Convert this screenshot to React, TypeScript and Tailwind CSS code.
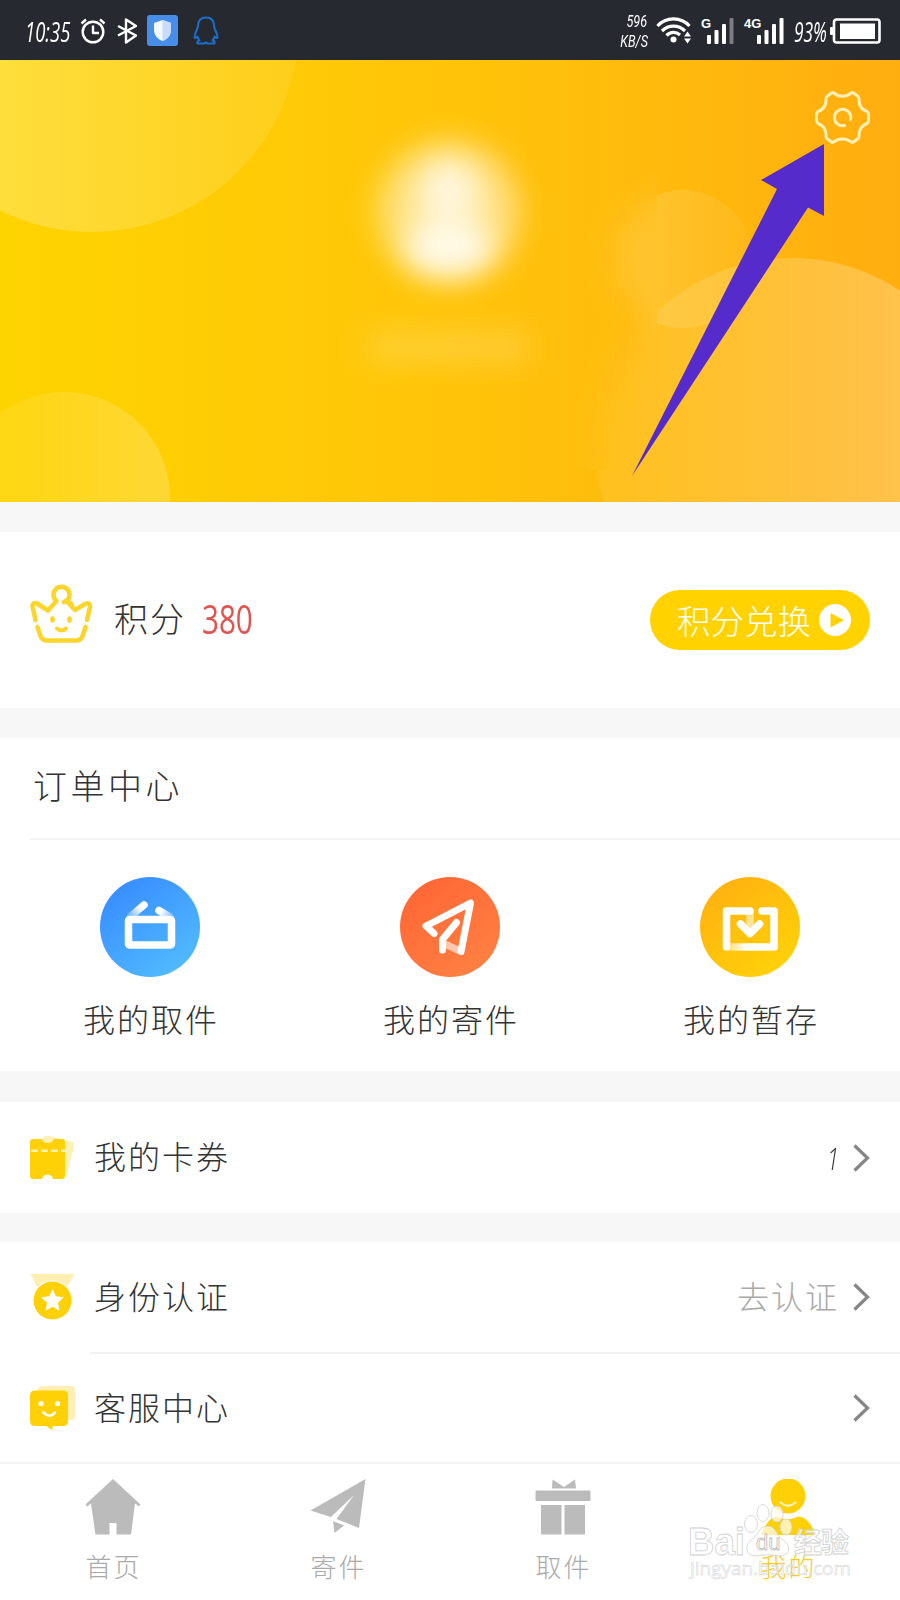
import type { ReactNode } from "react";

const tabLabel = "mt-[12px] pl-[2px] text-[26px] leading-[38px] tracking-[2px] font-light";

function StatusBar() {
  return (
    <div className="flex h-[60px] items-center bg-[#262930] pt-[2px] text-white">
      {/* Clock and left icons */}
      <div className="ml-[25px] w-[55px]">
        <span className="inline-block origin-left scale-x-[0.66] font-['Open_Sans'] text-[28px] font-normal italic">
          10:35
        </span>
      </div>

      <svg width="26" height="26" viewBox="0 0 26 26" fill="none" stroke="#fff" strokeWidth="2.4">
        <circle cx="13" cy="14" r="10.3" />
        <path d="M13 7.500V15H19M1.500 5.500L6 1.500M24.500 5.500L20 1.500" strokeLinejoin="round" />
      </svg>

      <svg className="ml-[11px]" width="20" height="26" viewBox="0 0 20 26" fill="none" stroke="#fff" strokeWidth="2.4">
        <path d="M1 8L19 17.500L9 24.500V1.500L19 8L1 17.500" strokeLinejoin="round" />
      </svg>

      <svg className="ml-[10px]" width="31" height="31" viewBox="0 0 31 31">
        <rect width="31" height="31" rx="3" fill="#478eea" />
        <path d="M15.500 5L24 8V15C24 20 20.500 24 15.500 26C10.500 24 7 20 7 15V8Z" fill="#f3f7fe" />
        <path d="M15.500 5L24 8V15C24 20 20.500 24 15.500 26Z" fill="#c8dbf8" />
      </svg>

      <svg className="ml-[15px]" width="26" height="29" viewBox="0 0 26 29" fill="none" stroke="#1b6fc9" strokeWidth="2" strokeLinejoin="round">
        <path d="M13 1.500C7.500 1.500 5 5 5 10C5 13 1.500 16.500 1.500 21.500C2 22.500 3.500 21.500 4.500 20.500C5 22.500 5.500 23.500 6.500 24.500C4.500 25 4 26 4.500 27.500H11L13 26.500L15 27.500H21.500C22 26 21.500 25 19.500 24.500C20.500 23.500 21 22.500 21.500 20.500C22.500 21.500 24 22.500 24.500 21.500C24.500 16.500 21 13 21 10C21 5 18.500 1.500 13 1.500Z" />
      </svg>

      {/* Network speed */}
      <div className="ml-auto w-[36px] text-right font-['Roboto'] text-[17px] leading-[20px] font-normal italic">
        <div className="origin-right scale-x-[0.74]">596</div>
        <div className="origin-right scale-x-[0.74]">KB/S</div>
      </div>

      <svg className="ml-[9px]" width="36" height="27" viewBox="0 0 36 27" fill="none" stroke="#fff" strokeWidth="3.2">
        <path d="M1.500 9C10 -0.500 25 -0.500 33.500 9" />
        <path d="M6 14C12.500 7.500 22.500 7.500 29 14" />
        <path d="M10.500 18.500C14.500 14.500 20 14.500 24 18" />
        <circle cx="17.500" cy="22.500" r="3" fill="#fff" stroke="none" />
        <path d="M28 19.500L31.500 14.500L35 19.500ZM28 21.500H35L31.500 26.500Z" fill="#fff" stroke="none" />
      </svg>

      <div className="ml-[9px] -mt-[14px] w-[6px] font-['Liberation_Sans'] text-[13px] leading-none font-bold">G</div>
      <svg width="28" height="26" viewBox="0 0 28 26" fill="#fff">
        <rect x="0" y="17" width="4" height="9" rx="1" />
        <rect x="7.500" y="12" width="4" height="14" rx="1" />
        <rect x="15" y="6" width="4" height="20" rx="1" />
        <rect x="22.500" y="0" width="4" height="26" rx="1" fill="#7d7e83" />
      </svg>

      <div className="ml-[9px] -mt-[14px] w-[13px] font-['Liberation_Sans'] text-[13px] leading-none font-bold">4G</div>
      <svg width="28" height="26" viewBox="0 0 28 26" fill="#fff">
        <rect x="0" y="17" width="4" height="9" rx="1" />
        <rect x="7.500" y="12" width="4" height="14" rx="1" />
        <rect x="15" y="6" width="4" height="20" rx="1" />
        <rect x="22.500" y="0" width="4" height="26" rx="1" />
      </svg>

      <div className="ml-[9px] w-[35px]">
        <span className="inline-block origin-left scale-x-[0.62] font-['Open_Sans'] text-[28px] font-normal italic">
          93%
        </span>
      </div>

      <svg className="mr-[19px]" width="52" height="26" viewBox="0 0 52 26" fill="none">
        <rect x="5" y="1.500" width="45.500" height="23" rx="2.500" stroke="#fff" strokeWidth="2.600" />
        <rect x="11" y="5.500" width="35" height="15.500" fill="#fff" />
        <rect x="1" y="9" width="3.500" height="8" rx="1" fill="#fff" />
      </svg>
    </div>
  );
}

function ProfileHeader() {
  return (
    <div className="h-[442px]">
      <svg width="900" height="442" viewBox="0 60 900 442" className="block">
        <defs>
          <linearGradient id="base">
            <stop offset="0" stopColor="#fed400" />
            <stop offset="0.5" stopColor="#ffc409" />
            <stop offset="1" stopColor="#ffae10" />
          </linearGradient>
          <linearGradient id="fadeOut">
            <stop offset="0.3" stopColor="#fff" stopOpacity="0.23" />
            <stop offset="1" stopColor="#fff" stopOpacity="0.08" />
          </linearGradient>
          <linearGradient id="fadeIn">
            <stop offset="0.3" stopColor="#fff" stopOpacity="0.08" />
            <stop offset="1" stopColor="#fff" stopOpacity="0.2" />
          </linearGradient>
          <linearGradient id="fadeBig">
            <stop offset="0" stopColor="#fff" stopOpacity="0.07" />
            <stop offset="0.8" stopColor="#fff" stopOpacity="0.25" />
          </linearGradient>
          <linearGradient id="fadeSmall">
            <stop offset="0.1" stopColor="#fff" stopOpacity="0.16" />
            <stop offset="1" stopColor="#fff" stopOpacity="0.04" />
          </linearGradient>
          <filter id="soft" x="-50%" y="-50%" width="200%" height="200%">
            <feGaussianBlur stdDeviation="16" />
          </filter>
          <filter id="glow" x="-50%" y="-80%" width="200%" height="260%">
            <feGaussianBlur stdDeviation="14" />
          </filter>
          <clipPath id="rightSide">
            <path d="M657 60H900V502H597V470H657Z" />
          </clipPath>
          <clipPath id="leftSide">
            <path d="M300 60H657V470H300Z" />
          </clipPath>
        </defs>

        <rect y="60" width="900" height="442" fill="url(#base)" />
        <circle cx="92" cy="25" r="207" fill="url(#fadeOut)" />
        <circle cx="64" cy="498" r="106" fill="url(#fadeIn)" />

        <g clipPath="url(#rightSide)">
          <circle cx="683" cy="259" r="69" fill="url(#fadeSmall)" />
          <circle cx="792" cy="453" r="195" fill="url(#fadeBig)" />
        </g>
        <g clipPath="url(#leftSide)">
          <g filter="url(#soft)">
            <circle cx="685" cy="259" r="69" fill="url(#fadeSmall)" />
            <circle cx="792" cy="452" r="195" fill="url(#fadeBig)" />
          </g>
        </g>

        {/* Hidden avatar and name */}
        <g filter="url(#glow)">
          <circle cx="449" cy="212" r="72" fill="#fff" fillOpacity="0.45" />
          <ellipse cx="449" cy="213" rx="40" ry="48" fill="#fff" fillOpacity="0.38" />
          <ellipse cx="449" cy="188" rx="28" ry="30" fill="#fff" fillOpacity="0.6" />
          <ellipse cx="449" cy="250" rx="46" ry="28" fill="#fff" fillOpacity="0.75" />
          <rect x="368" y="331" width="162" height="32" fill="#fff" fillOpacity="0.17" />
        </g>

        {/* Settings */}
        <g transform="translate(842.500 117.500)" fill="none" stroke="#fff0b8" strokeWidth="3" strokeLinejoin="round" strokeLinecap="round">
          <path d="M26 -3Q26 -5 24.500 -6C19 -8 16 -12 16.500 -19Q16.500 -20.500 15 -21.500L11 -24.500Q9.500 -25.500 8 -24C4 -20.500 -4 -20.500 -8 -24Q-9.500 -25.500 -11 -24.500L-15 -21.500Q-16.500 -20.500 -16.500 -19C-16 -12 -19 -8 -24.500 -6Q-26 -5 -26 -3V3Q-26 5 -24.500 6C-19 8 -16 12 -16.500 19Q-16.500 20.500 -15 21.500L-11 24.500Q-9.500 25.500 -8 24C-4 20.500 4 20.500 8 24Q9.500 25.500 11 24.500L15 21.500Q16.500 20.500 16.500 19C16 12 19 8 24.500 6Q26 5 26 3Z" />
          <path d="M8 2A8.200 8.200 0 1 0 2 8" />
        </g>

        <path d="M824 144V216L808 207.500L632 476L777 189L761 180Z" fill="#562bcb" />
      </svg>
    </div>
  );
}

function Chevron() {
  return (
    <svg width="18" height="30" viewBox="0 0 18 30" fill="none" stroke="#868686" strokeWidth="3.200">
      <path d="M1.500 2.500L14.500 15L1.500 27.500" />
    </svg>
  );
}

interface RowProps {
  icon: ReactNode;
  title: string;
  children?: ReactNode;
}

function Row({ icon, title, children }: RowProps) {
  return (
    <div className="flex flex-1 items-center pr-[29px] pl-[30px]">
      <div className="w-[64px]">{icon}</div>
      <span className="-mt-[5px] text-[32px] tracking-[2px]">{title}</span>
      <div className="ml-auto flex items-center">
        {children}
        <Chevron />
      </div>
    </div>
  );
}

function OrderItem({ title, children }: { title: string; children: ReactNode }) {
  return (
    <div className="flex w-[300px] flex-col items-center">
      {children}
      <span className="mt-[17px] pl-[2px] text-[32px] leading-[48px] tracking-[2px]">{title}</span>
    </div>
  );
}

function Watermark() {
  return (
    <svg className="absolute top-[37px] right-[45px]" width="170" height="90" viewBox="685 1500 170 90">
      <g fill="#fff" fillOpacity="0.7" stroke="#cfcfcf" strokeWidth="0.800">
        <text x="688" y="1554" fontFamily="Liberation Sans, sans-serif" fontWeight="bold" fontSize="38" textLength="57" lengthAdjust="spacingAndGlyphs">Bai</text>
        <ellipse cx="751" cy="1523" rx="6.500" ry="8.500" />
        <ellipse cx="763" cy="1512" rx="6" ry="8.500" />
        <ellipse cx="777" cy="1513" rx="6" ry="8" />
        <ellipse cx="786" cy="1526" rx="6" ry="8" />
        <path d="M767 1525C777 1525 776 1535 783 1539C793 1546 789 1555 779 1555C771 1553 764 1554 756 1555C746 1555 744 1546 751 1539C759 1534 758 1526 767 1525Z" />
        <text x="756" y="1549" fontFamily="Liberation Sans, sans-serif" fontSize="22" stroke="#bdbdbd">du</text>
        <text x="794" y="1552" fontFamily="Noto Sans CJK SC, sans-serif" fontWeight="bold" fontSize="28" textLength="55">经验</text>
        <text x="690" y="1574" fontFamily="Open Sans, sans-serif" fontWeight="400" fontSize="19" strokeWidth="0.500" textLength="161" lengthAdjust="spacingAndGlyphs">jingyan.baidu.com</text>
      </g>
    </svg>
  );
}

function TabBar() {
  return (
    <div className="relative flex h-[138px] border-t-2 border-[#f3f3f3] bg-white pt-[15px] text-[#aaa]">
      <div className="flex w-[225px] flex-col items-center">
        <svg width="56" height="56" viewBox="0 0 56 56" fill="#bbb">
          <path d="M28 0L55.500 25.500L54 27.500L50 24.500L46 55.500H31.500V44H24.500V55.500H10.500L6 24.500L2 27.500L0.500 25.500Z" />
        </svg>
        <span className={tabLabel}>首页</span>
      </div>
      <div className="flex w-[225px] flex-col items-center">
        <svg width="56" height="56" viewBox="0 0 56 56" fill="#bbb">
          <path d="M55.500 0L49 49L26.500 40L44 16L21 38L0.500 31.500Z" />
          <path d="M23 42L34 46.500L24.500 54Z" />
        </svg>
        <span className={tabLabel}>寄件</span>
      </div>
      <div className="flex w-[225px] flex-col items-center">
        <svg width="56" height="56" viewBox="0 0 56 56" fill="#bbb">
          <path d="M17.500 0.500L29 8L40 0.500L41 9.500H17Z" />
          <rect x="0.500" y="11.500" width="55" height="10.500" rx="1" />
          <rect x="6" y="26" width="20.500" height="29.500" />
          <rect x="29.500" y="26" width="20.500" height="29.500" />
        </svg>
        <span className={tabLabel}>取件</span>
      </div>
      <div className="flex w-[225px] flex-col items-center text-[#f8cc1c]">
        <svg width="56" height="56" viewBox="0 0 56 56" fill="#fed005">
          <circle cx="28" cy="17" r="17.500" />
          <path d="M20.500 23.500Q28 30 35.500 23.500" fill="none" stroke="#fff2b5" strokeWidth="2.200" strokeLinecap="round" />
          <path d="M0.500 56C5 45 12 37 17 37.500C24 41 31 41 38 37.500C45 37 52 45 55.500 56Z" />
        </svg>
        <span className={tabLabel}>我的</span>
      </div>
      <Watermark />
    </div>
  );
}

export default function App() {
  return (
    <div className="flex h-[1600px] w-[900px] flex-col overflow-hidden bg-[#f7f7f7] font-['Noto_Sans_CJK_SC',sans-serif] font-light text-[#333]">
      <StatusBar />
      <ProfileHeader />

      {/* Points */}
      <div className="mt-[30px] flex h-[176px] items-center bg-white pr-[30px] pl-[30px]">
        <svg width="64" height="66" viewBox="0 0 64 66" fill="none" stroke="#fbd52c" strokeWidth="4.600" strokeLinecap="round" strokeLinejoin="round" className="-mt-[10px]">
          <path d="M5.500 38L2.500 24Q3 20 7 21.500L18 28.500L26.500 19A8 8 0 1 1 36.500 19L45 28L56 21.500Q60.500 20.500 60 25L57 38" />
          <path d="M34 20Q39 17 42 24" />
          <path d="M7.500 45L10.500 54Q12 58.500 17 58.500H46Q51 58.500 52.500 54L55.500 45" />
          <path d="M27 46.500Q31.500 50.500 36 46.500" strokeWidth="4" />
          <path d="M22.500 36.500V38.500M39.500 36.500V38.500" />
        </svg>
        <span className="-mt-[5px] ml-[20px] text-[34px] tracking-[2px]">积分</span>
        <div className="-mt-[2px] ml-[16px] w-[60px] text-[#e2534f]">
          <span className="inline-block origin-left scale-x-[0.74] font-['Open_Sans'] text-[40px] font-normal">
            380
          </span>
        </div>
        <button className="ml-auto flex h-[60px] w-[220px] items-center rounded-full bg-[#ffd200] pl-[27px] text-[33.5px] leading-none text-white">
          积分兑换
          <svg width="32" height="32" viewBox="0 0 32 32" className="ml-[8px]">
            <circle cx="16" cy="16" r="16" fill="#fff" />
            <path d="M11.500 9V23.500L25 16.200Z" fill="#ffd200" />
          </svg>
        </button>
      </div>

      {/* Orders */}
      <div className="mt-[30px] h-[334px] bg-white">
        <div className="ml-[30px] flex h-[102px] items-center border-b-2 border-[#f4f4f4] pb-[7px] pl-[3px] text-[34px] tracking-[3.5px]">
          订单中心
        </div>
        <div className="flex pt-[37px]">
          <OrderItem title="我的取件">
            <svg width="100" height="100" viewBox="0 0 100 100" fill="none" strokeLinecap="round">
              <defs>
                <linearGradient id="blue" x1="0.200" y1="0.100" x2="0.800" y2="0.900">
                  <stop stopColor="#398fff" />
                  <stop offset="1" stopColor="#50b9ff" />
                </linearGradient>
                <linearGradient id="flapL" gradientUnits="userSpaceOnUse" x1="44" y1="26" x2="29" y2="40">
                  <stop offset="0.300" stopColor="#fff" />
                  <stop offset="1" stopColor="#fff" stopOpacity="0.200" />
                </linearGradient>
                <linearGradient id="flapR" gradientUnits="userSpaceOnUse" x1="58" y1="33" x2="73" y2="41">
                  <stop offset="0.200" stopColor="#fff" />
                  <stop offset="1" stopColor="#fff" stopOpacity="0.200" />
                </linearGradient>
              </defs>
              <circle cx="50" cy="50" r="50" fill="url(#blue)" />
              <path d="M44 28L31 39" stroke="url(#flapL)" strokeWidth="7.500" />
              <path d="M59 33.500L70 40" stroke="url(#flapR)" strokeWidth="7.500" />
              <rect x="28.500" y="42.500" width="43" height="25.500" rx="1" stroke="#fff" strokeWidth="7.500" />
            </svg>
          </OrderItem>
          <OrderItem title="我的寄件">
            <svg width="100" height="100" viewBox="0 0 100 100" fill="none" strokeLinecap="round" strokeLinejoin="round" strokeWidth="7">
              <defs>
                <linearGradient id="orange" x1="0.200" y1="0.100" x2="0.800" y2="0.900">
                  <stop stopColor="#ff6836" />
                  <stop offset="1" stopColor="#ff7f42" />
                </linearGradient>
              </defs>
              <circle cx="50" cy="50" r="50" fill="url(#orange)" />
              <path d="M45 67L60 74" stroke="#fff" strokeOpacity="0.600" strokeLinecap="butt" />
              <path d="M34 56.500L26 49L70.500 26L61 74.500" stroke="#fff" />
              <path d="M56.500 45.500L42.500 62.500V73" stroke="#fff" />
            </svg>
          </OrderItem>
          <OrderItem title="我的暂存">
            <svg width="100" height="100" viewBox="0 0 100 100" fill="none" strokeLinecap="round" strokeLinejoin="round" strokeWidth="7.500">
              <defs>
                <linearGradient id="yellow" x1="0.200" y1="0.100" x2="0.800" y2="0.900">
                  <stop stopColor="#ffb310" />
                  <stop offset="1" stopColor="#ffd009" />
                </linearGradient>
                <linearGradient id="tray" gradientUnits="userSpaceOnUse" x1="28" y1="0" x2="46" y2="0">
                  <stop stopColor="#fff" stopOpacity="0.400" />
                  <stop offset="1" stopColor="#fff" />
                </linearGradient>
              </defs>
              <circle cx="50" cy="50" r="50" fill="url(#yellow)" />
              <path d="M50 36V54" stroke="#fff" strokeOpacity="0.550" />
              <path d="M50 34H26.500V70" stroke="#fff" />
              <path d="M30 70H74V34H62" stroke="url(#tray)" />
              <path d="M40.500 47L50 56.500L59.500 47" stroke="#fff" />
            </svg>
          </OrderItem>
        </div>
      </div>

      {/* Coupons */}
      <div className="mt-[31px] flex h-[111px] bg-white">
        <Row
          title="我的卡券"
          icon={
            <svg width="46" height="46" viewBox="0 0 46 46">
              <path d="M13 3Q15 0 19 1L43 7Q45 8 44 10L37 40H30L13 10Z" fill="#fff0b5" />
              <path d="M3 4H12Q13 8 18 8Q22 8 24 4H32Q35 4 35 7V41Q35 44 32 44H23Q22 39.500 17.500 39.500Q13 39.500 12 44H3Q0 44 0 41V7Q0 4 3 4Z" fill="#fed107" />
              <path d="M1 15.800H44" stroke="#fff0b5" strokeWidth="2.400" strokeDasharray="7 3" />
            </svg>
          }
        >
          <span className="mr-[11px] inline-block scale-x-[0.700] font-['Open_Sans'] text-[32px] leading-none italic">1</span>
        </Row>
      </div>

      {/* Account */}
      <div className="mt-[29px] flex h-[110px] bg-white">
        <Row
          title="身份认证"
          icon={
            <svg width="46" height="56" viewBox="0 0 46 56">
              <path d="M0.500 5H44.500L36 20H8Z" fill="#ffefb3" />
              <circle cx="22.500" cy="31.500" r="20" fill="#fff" />
              <circle cx="22.500" cy="31.500" r="19" fill="#fed107" />
              <path d="M22.500 20L25.900 27.300L33.900 28.300L28 33.800L29.500 41.700L22.500 37.800L15.500 41.700L17 33.800L11.100 28.300L19.100 27.300Z" fill="#fff" />
            </svg>
          }
        >
          <span className="-mt-[5px] mr-[14px] text-[32px] tracking-[2px] text-[#aaa]">去认证</span>
        </Row>
      </div>
      <div className="bg-white pl-[90px]">
        <div className="h-[2px] bg-[#f2f2f2]" />
      </div>
      <div className="flex h-[108px] bg-white">
        <Row
          title="客服中心"
          icon={
            <svg width="46" height="56" viewBox="0 0 46 56">
              <rect x="8" y="6" width="37" height="34" rx="4" fill="#ffefb3" />
              <path d="M5 10.500H33Q38 10.500 38 15.500V41Q38 46 33 46H22.500V50L16 46H5Q0 46 0 41V15.500Q0 10.500 5 10.500Z" fill="#fed107" />
              <circle cx="11" cy="23.500" r="2.600" fill="#fff" />
              <circle cx="27.500" cy="23.500" r="2.600" fill="#fff" />
              <path d="M13.500 32.500Q19.500 39 25 32.500" fill="none" stroke="#fff" strokeWidth="2.600" strokeLinecap="round" />
            </svg>
          }
        />
      </div>

      <TabBar />
    </div>
  );
}
